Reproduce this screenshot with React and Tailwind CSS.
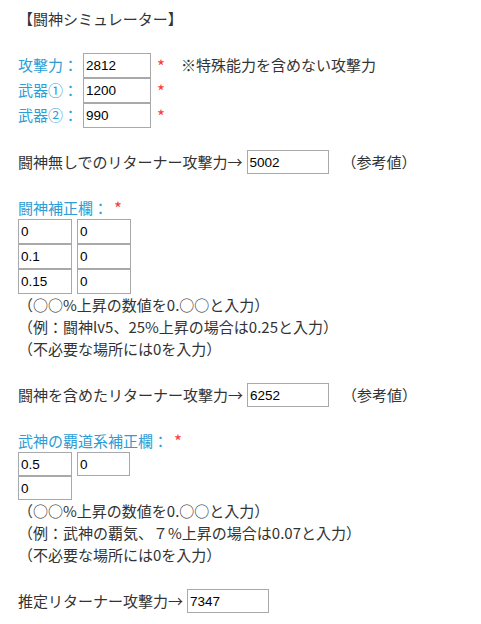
import React, { useState } from "react";

const jp = { fontFamily: '"Noto Sans CJK JP", "Noto Sans", sans-serif' };

const Box = ({ value, w = "w-[54px]", h = "h-[25px]", className = "" }) => {
  const [v, setV] = useState(value);
  return (
    <input
      type="text"
      value={v}
      onChange={(e) => setV(e.target.value)}
      className={`${w} ${h} ${className} shrink-0 border border-[#a9a9a9] bg-white pl-[2px] text-[13.5px] text-black outline-none font-['Liberation_Sans',Arial,sans-serif]`}
    />
  );
};

const Star = ({ className = "" }) => (
  <span className={`text-[#ff3b3b] text-[17px] leading-none ${className}`}>*</span>
);

const Label = ({ children, className = "" }) => (
  <span className={`text-[#2c9dd6] ${className}`}>{children}</span>
);

const Notes = ({ lines }) => (
  <div className="leading-[22px]">
    {lines.map((l) => (
      <div key={l}>{l}</div>
    ))}
  </div>
);

const ResultRow = ({ label, value, note, top }) => (
  <div className={`flex items-center h-[24px] ${top}`}>
    <span>{label}</span>
    <Box value={value} w="w-[82px]" h="h-[24px]" className="ml-[4px]" />
    {note && <span className="ml-[13px]">{note}</span>}
  </div>
);

export default function App() {
  const base = [
    { label: "攻撃力：", value: "2812", note: "※特殊能力を含めない攻撃力" },
    { label: "武器①：", value: "1200" },
    { label: "武器②：", value: "990" },
  ];

  return (
    <div
      style={jp}
      className="min-h-screen w-[481px] bg-white text-[#333] text-[15px] pl-[18px] pt-[7px]"
    >
      <div className="leading-[23px]">【闘神シミュレーター】</div>

      {/* base stats */}
      <div className="mt-[23px]">
        {base.map((r) => (
          <div key={r.label} className="flex items-center h-[25px]">
            <Label className="w-[65px]">{r.label}</Label>
            <Box value={r.value} w="w-[68px]" />
            <Star className="ml-[6px]" />
            {r.note && <span className="ml-[16px]">{r.note}</span>}
          </div>
        ))}
      </div>

      <ResultRow
        label="闘神無しでのリターナー攻撃力→"
        value="5002"
        note="（参考値）"
        top="mt-[22px]"
      />

      {/* 闘神補正欄 */}
      <div className="mt-[22px] leading-[23px] flex items-center">
        <Label>闘神補正欄：</Label>
        <Star className="ml-[6px]" />
      </div>
      <div className="flex flex-col">
        {[
          ["0", "0"],
          ["0.1", "0"],
          ["0.15", "0"],
        ].map((r, i) => (
          <div key={i} className="flex gap-[5px]">
            <Box value={r[0]} />
            <Box value={r[1]} />
          </div>
        ))}
      </div>
      <Notes
        lines={[
          "（○○%上昇の数値を0.○○と入力）",
          "（例：闘神lv5、25%上昇の場合は0.25と入力）",
          "（不必要な場所には0を入力）",
        ]}
      />

      <ResultRow
        label="闘神を含めたリターナー攻撃力→"
        value="6252"
        note="（参考値）"
        top="mt-[23px]"
      />

      {/* 武神の覇道系補正欄 */}
      <div className="mt-[22px] leading-[23px] flex items-center">
        <Label>武神の覇道系補正欄：</Label>
        <Star className="ml-[6px]" />
      </div>
      <div className="flex flex-col">
        <div className="flex gap-[5px] items-start">
          <Box value="0.5" h="h-[24px]" />
          <Box value="0" w="w-[53px]" h="h-[24px]" />
        </div>
        <Box value="0" h="h-[24px]" />
      </div>
      <Notes
        lines={[
          "（○○%上昇の数値を0.○○と入力）",
          "（例：武神の覇気、７%上昇の場合は0.07と入力）",
          "（不必要な場所には0を入力）",
        ]}
      />

      <ResultRow
        label="推定リターナー攻撃力→"
        value="7347"
        top="mt-[23px]"
      />
    </div>
  );
}
